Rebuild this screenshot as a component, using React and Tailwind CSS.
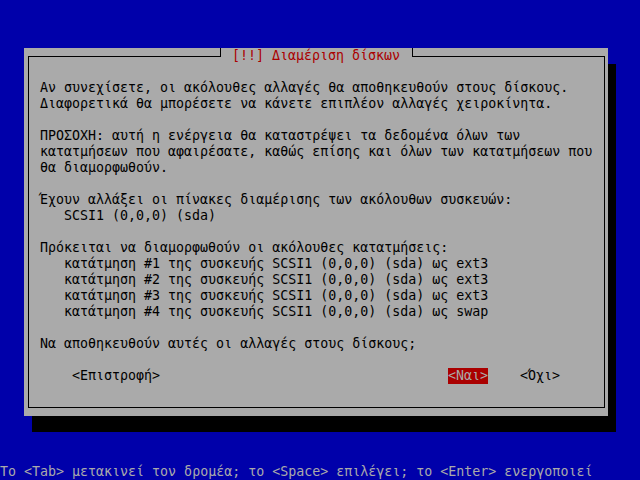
export default function App() {
  const mono = { fontFamily: '"DejaVu Sans Mono", "Liberation Mono", monospace' };
  const lines = [
    "",
    "Αν συνεχίσετε, οι ακόλουθες αλλαγές θα αποθηκευθούν στους δίσκους.",
    "Διαφορετικά θα μπορέσετε να κάνετε επιπλέον αλλαγές χειροκίνητα.",
    "",
    "ΠΡΟΣΟΧΗ: αυτή η ενέργεια θα καταστρέψει τα δεδομένα όλων των",
    "κατατμήσεων που αφαιρέσατε, καθώς επίσης και όλων των κατατμήσεων που",
    "θα διαμορφωθούν.",
    "",
    "Έχουν αλλάξει οι πίνακες διαμέρισης των ακόλουθων συσκευών:",
    "   SCSI1 (0,0,0) (sda)",
    "",
    "Πρόκειται να διαμορφωθούν οι ακόλουθες κατατμήσεις:",
    "   κατάτμηση #1 της συσκευής SCSI1 (0,0,0) (sda) ως ext3",
    "   κατάτμηση #2 της συσκευής SCSI1 (0,0,0) (sda) ως ext3",
    "   κατάτμηση #3 της συσκευής SCSI1 (0,0,0) (sda) ως ext3",
    "   κατάτμηση #4 της συσκευής SCSI1 (0,0,0) (sda) ως swap",
    "",
    "Να αποθηκευθούν αυτές οι αλλαγές στους δίσκους;",
  ];
  return (
    <div
      className="w-[640px] h-[480px] bg-[#0000aa] flex flex-col overflow-hidden text-[13.3px] leading-4"
      style={mono}
    >
      <div className="ml-[24px] mt-[48px] w-[584px] h-[368px] bg-[#aaaaaa] shadow-[8px_16px_0_0_#000] pt-[8px] px-[4px]">
        <div className="relative w-[577px] h-[352px] border border-black">
          <div className="absolute left-[191px] top-[-9px] h-4 w-[193px] bg-[#aaaaaa] flex items-start">
            <div className="w-px h-[9px] bg-black" />
            <div className="ml-[11px] w-[168px] whitespace-pre text-[#aa0000]">[!!] Διαμέριση δίσκων</div>
            <div className="ml-[12px] w-px h-[9px] bg-black" />
          </div>
          <div className="pl-[11px] pt-[7px] flex flex-col text-black">
            {lines.map((l, i) => (
              <div key={i} className="h-4 whitespace-pre">{l}</div>
            ))}
            <div className="h-4" />
            <div className="h-4 flex whitespace-pre">
              <span className="ml-[32px] w-[88px]">&lt;Επιστροφή&gt;</span>
              <span className="ml-[288px] w-[40px] bg-[#aa0000] text-[#aaaaaa]">&lt;Ναι&gt;</span>
              <span className="ml-[32px]">&lt;Όχι&gt;</span>
            </div>
          </div>
        </div>
      </div>
      <div className="mt-[48px] h-4 whitespace-pre text-[#aaaaaa]">
        Το &lt;Tab&gt; μετακινεί τον δρομέα; το &lt;Space&gt; επιλέγει; το &lt;Enter&gt; ενεργοποιεί
      </div>
    </div>
  );
}
